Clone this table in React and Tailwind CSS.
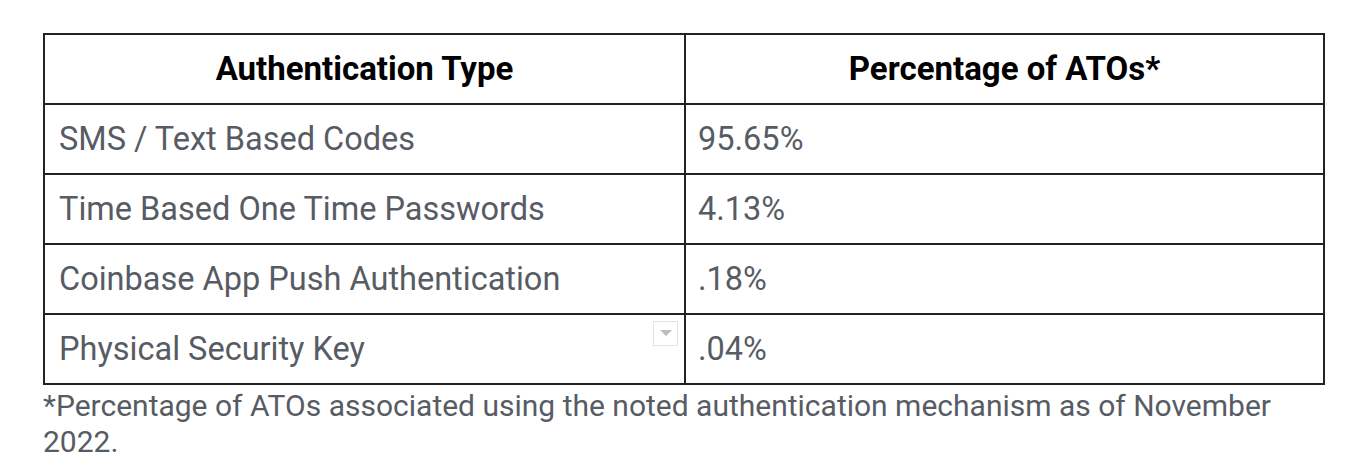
import React from 'react';

const ROWS = [
    { type: 'SMS / Text Based Codes', pct: '95.65%' },
    { type: 'Time Based One Time Passwords', pct: '4.13%' },
    { type: 'Coinbase App Push Authentication', pct: '.18%' },
    { type: 'Physical Security Key', pct: '.04%', menu: true },
];

export default function App() {
    return (
        <div className="min-h-screen bg-white pl-[43px] pt-[33px]" style={{ fontFamily: 'Roboto, "Liberation Sans", sans-serif' }}>
            <table className="w-[1282px] border-collapse border-2 border-[#222]">
                <thead>
                    <tr className="h-[70px]">
                        <th className="w-[641px] border-2 border-[#222] text-center text-[33px] font-bold text-black">Authentication Type</th>
                        <th className="border-2 border-[#222] text-center text-[33px] font-bold text-black">Percentage of ATOs*</th>
                    </tr>
                </thead>
                <tbody>
                    {ROWS.map(row => (
                        <tr key={row.type} className="h-[70px]">
                            <td className="relative border-2 border-[#222] pl-[14px] text-[32.5px] text-[#575c64]">
                                {row.type}
                                {row.menu && (
                                    <span className="absolute right-[6px] top-[6px] flex h-[25px] w-[25px] items-start justify-center border border-[#e4e4e4] pt-[8px]">
                                        <span className="h-0 w-0 border-x-[6px] border-t-[6px] border-x-transparent border-t-[#bdbdbd]" />
                                    </span>
                                )}
                            </td>
                            <td className="border-2 border-[#222] pl-[12px] text-[32.5px] text-[#575c64]">{row.pct}</td>
                        </tr>
                    ))}
                </tbody>
            </table>
            <p className="mt-[3px] w-[1282px] text-[30px] leading-[36px] text-[#575c64]">
                *Percentage of ATOs associated using the noted authentication mechanism as of November 2022.
            </p>
        </div>
    );
}
